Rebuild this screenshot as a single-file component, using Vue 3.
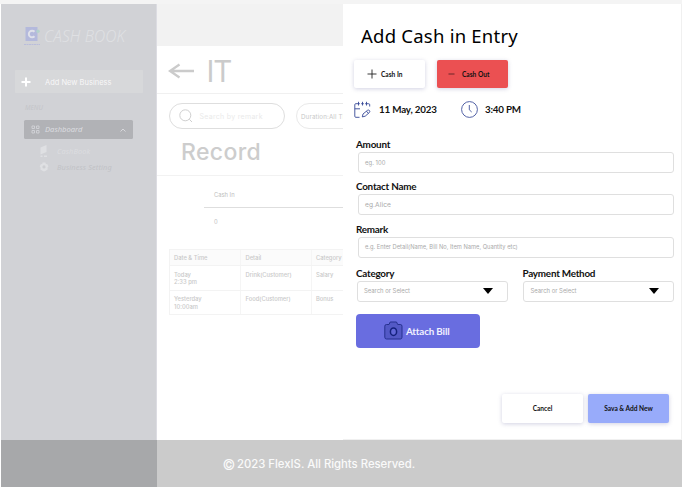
<script setup>
const rows = [
  ['Today\n2:33 pm', 'Drink(Customer)', 'Salary'],
  ['Yesterday\n10:00am', 'Food(Customer)', 'Bonus'],
]
const fields = [
  { label: 'Amount', hint: 'eg. 100', cls: 'amount' },
  { label: 'Contact Name', hint: 'eg.Alice', cls: 'contact' },
  { label: 'Remark', hint: 'e.g. Enter Detail(Name, Bill No, Item Name, Quantity etc)', cls: 'remark' },
]
const selects = ['Category', 'Payment Method']
</script>

<template>
  <div class="page">
    <div class="body">
      <aside class="sidebar">
        <div class="brand">
          <svg class="logo" width="18" height="20" viewBox="0 0 18 20">
            <rect x="1.500" y="1" width="12" height="14" fill="#b4b9dc" />
            <path d="M10.500 5.700A3.300 3.300 0 1 0 10.500 10.300" fill="none" stroke="#dfe1ea" stroke-width="2" />
            <circle cx="14" cy="5.200" r="1.700" fill="#b2d2cc" />
            <path d="M0 18.500H16" stroke="#b9bddb" stroke-width="1" stroke-dasharray="2 .5" />
          </svg>
          <span class="brand-name">CASH BOOK</span>
        </div>
        <div class="add-business">
          <svg width="10" height="10" viewBox="0 0 10 10"><path d="M5 .5V9.500M.5 5H9.500" stroke="#fff" stroke-width="2" /></svg>
          <span>Add New Business</span>
        </div>
        <div class="menu-title"><span>MENU</span></div>
        <div class="dashboard">
          <svg width="9" height="9" viewBox="0 0 9 9" fill="none" stroke="#d3d4d8" stroke-width=".9"><path d="M1 1h2.500v2.500H1zM5.500 1H8v2.500H5.500zM1 5.500h2.500V8H1zM5.500 5.500H8V8H5.500z" /></svg>
          <span>Dashboard</span>
          <svg class="chev" width="6" height="4" viewBox="0 0 6 4"><path d="M.5 3.500L3 1L5.500 3.500" fill="none" stroke="#dcdde0" stroke-width=".9" /></svg>
        </div>
        <div class="sub">
          <svg width="10" height="13" viewBox="0 0 10 13" fill="#dfe0e3"><path d="M1.500 2.500L7.500 0V7L1.500 9.500zM1.500 10.500h2v1.500h-2zM5 10.500h3v1.500H5z" /></svg>
          <span class="s1">CashBook</span>
        </div>
        <div class="sub">
          <svg width="10" height="10" viewBox="0 0 10 10"><path d="M3.600.6h2.800l.5 1.500 1.500.1 1 2.300-1 1.200.4 1.600-2 1.500L5 9.400 3.400 8.800l-2-1.400.3-1.700-1-1.200 1-2.300 1.500-.1z" fill="#dfe0e3" /><circle cx="5" cy="4.900" r="1.600" fill="#cdced2" /></svg>
          <span class="s2">Business Setting</span>
        </div>
      </aside>
      <main class="main">
        <div class="band"></div>
        <div class="heading">
          <svg width="27" height="16" viewBox="0 0 27 16"><path d="M26 8H2M11.500 1.500L2 8L11.500 14.500" fill="none" stroke="#cbcbcb" stroke-width="2.300" /></svg>
          <span>IT</span>
        </div>
        <div class="filters">
          <div class="search">
            <svg width="14" height="14" viewBox="0 0 14 14" fill="none" stroke="#cfcfcf"><circle cx="6.300" cy="6.300" r="5.500" /><path d="M10.300 10.300L13 13" /></svg>
            <span>Search by remark</span>
          </div>
          <div class="duration"><span>Duration:All Time</span></div>
        </div>
        <h2 class="record"><span>Record</span></h2>
        <div class="summary">
          <div class="sum-label">Cash In</div>
          <div class="sum-value">0</div>
        </div>
        <div class="table">
          <div class="row head"><div>Date &amp; Time</div><div>Detail</div><div>Category</div></div>
          <div v-for="r in rows" :key="r[1]" class="row"><div v-for="c in r" :key="c">{{ c }}</div></div>
        </div>
      </main>
    </div>
    <footer class="footer">
      <div class="footer-side"></div>
      <div class="footer-main"><span class="copy">©</span><span class="rights">2023 FlexIS. All Rights Reserved.</span></div>
    </footer>

    <section class="drawer">
      <h1><span>Add Cash in Entry</span></h1>
      <div class="types">
        <div class="btn cash-in">
          <svg width="10" height="10" viewBox="0 0 10 10"><path d="M5 .5V9.500M.5 5H9.500" stroke="#222" stroke-width=".9" /></svg>
          <span>Cash In</span>
        </div>
        <div class="btn cash-out">
          <svg width="7" height="4" viewBox="0 0 7 4"><path d="M.5 2H6.500" stroke="#5f2225" stroke-width=".9" /></svg>
          <span>Cash Out</span>
        </div>
      </div>
      <div class="when">
        <svg width="17" height="18" viewBox="0 0 17 18" fill="none" stroke="#354796" stroke-width=".9">
          <path d="M4.500.8V4.500M8.500.8V4.500M12.500.8V4.500M5.800 2.700H1.800Q.8 2.700.8 3.700V15.300Q.8 16.300 1.800 16.300H5.500M7.200 2.700h2.600M11.200 2.700H14.500Q15.700 2.700 15.700 3.700V5.500M.8 7.800H6" />
          <path d="M8.300 15.900L9 13L13.500 9.300Q14.700 8.700 15.500 9.600Q16.200 10.600 15.400 11.500L11.200 15.200zM12.500 10.200L14.300 12.300" />
        </svg>
        <span class="date">11 May, 2023</span>
        <svg width="17" height="17" viewBox="0 0 17 17" fill="none" stroke="#354796" stroke-width=".85"><circle cx="8.500" cy="8.500" r="7.900" /><path d="M8.300 4V8.800L10.700 11" /></svg>
        <span class="time">3:40 PM</span>
      </div>
      <div class="fields">
        <div v-for="f in fields" :key="f.label" class="field" :class="f.cls">
          <label><span>{{ f.label }}</span></label>
          <div class="input"><span>{{ f.hint }}</span></div>
        </div>
      </div>
      <div class="selects">
        <div v-for="(s, i) in selects" :key="s" class="field" :class="'sel' + i">
          <label><span>{{ s }}</span></label>
          <div class="input select">
            <span>Search or Select</span>
            <svg width="10" height="6" viewBox="0 0 10 6"><path d="M0 0H10L5 6z" fill="#000" /></svg>
          </div>
        </div>
      </div>
      <div class="attach">
        <svg width="19" height="19" viewBox="0 0 19 19" fill="#5359c6" stroke="#26318f" stroke-width="1">
          <path d="M2.500 3.500H5L6.200 1H12.500L13.700 3.500H16.300Q18 3.500 18 5.200V16.200Q18 18 16.300 18H2.500Q.8 18 .8 16.200V5.200Q.8 3.500 2.500 3.500z" />
          <ellipse cx="9.500" cy="10.700" rx="3.100" ry="3.800" fill="#6268d8" stroke="#15227c" stroke-width="1.500" />
        </svg>
        <span>Attach Bill</span>
      </div>
      <div class="actions">
        <div class="btn cancel"><span>Cancel</span></div>
        <div class="btn save"><span>Sava &amp; Add New</span></div>
      </div>
    </section>
  </div>
</template>

<style>
body { background: #fff; overflow: hidden; }
</style>

<style scoped>
* { box-sizing: border-box; }
span { white-space: nowrap; }
svg { display: block; flex: none; }
.page { position: relative; width: 682px; height: 487px; display: flex; flex-direction: column; padding-top: 4px; background: linear-gradient(#f4f4f4 4px, #fff 4px); font-family: Inter, sans-serif; }
.body { display: flex; height: 436px; }
.sidebar { width: 156px; margin-left: 1px; background: #d1d2d6; border-right: 1px solid #dcdce2; padding: 22px 0 0 14px; font-family: "Noto Sans", sans-serif; }
.brand { display: flex; height: 22px; padding-left: 9px; }
.brand-name { font-style: italic; font-size: 15.500px; line-height: 20px; color: #dfe0e3; margin-left: 2px; letter-spacing: .1px; font-weight: 300; }
.add-business { display: flex; align-items: center; width: 128px; height: 23px; margin-top: 22px; padding-left: 6px; background: #d7d8da; color: #f7f7f8; font: 7.5px/23px Inter, sans-serif; border-radius: 1px; }
.add-business span { margin-left: 14px; padding-top: 1px; }
.menu-title { height: 27px; padding: 9px 0 0 10px; font: italic 6.500px/12px "Noto Sans", sans-serif; color: #c4c5c9; }
.dashboard { display: flex; align-items: center; margin-left: 9px; width: 109px; height: 19px; padding: 0 7px; background: #b1b2b6; border-radius: 1.500px; color: #dcdde0; font-style: italic; font-size: 7.6px; }
.dashboard span { margin-left: 5px; margin-top: -1px; }
.chev { margin-left: auto; }
.sub { display: flex; align-items: center; height: 16px; margin-left: 24px; font-style: italic; font-size: 7.400px; }
.dashboard + .sub { margin-top: 4px; }
.sub span { margin-left: 8px; letter-spacing: .12px; }
.s1 { color: #dcdde0; }
.s2 { color: #c1c2c6; }
.main { flex: 1; overflow: hidden; color: #cbcbcb; }
.band { height: 42px; background: #f2f2f2; }
.heading { display: flex; align-items: center; height: 48px; border-bottom: 1px solid #f0f0f0; padding: 3px 0 0 11px; font-size: 29.500px; }
.heading span { margin-left: 11.500px; letter-spacing: -1.200px; }
.filters { display: flex; padding: 9px 0 0 12px; gap: 11px; font-size: 7px; }
.search, .duration { display: flex; align-items: center; height: 26px; border: 1px solid #dedede; border-radius: 13px; width: 116px; padding-left: 9px; }
.search span { margin-left: 6.500px; color: #eaeaea; letter-spacing: .3px; }
.duration { width: 80px; padding-left: 4px; border-color: #e9e9e9; color: #c8c8c8; font-size: 6.200px; letter-spacing: .15px; flex: none; }
.record { margin: 0; height: 47px; border-bottom: 1px solid #f2f2f2; padding: 8px 0 0 24px; font: 500 23px/30px Inter, sans-serif; letter-spacing: .35px; color: #cdcdcd; }
.summary { margin: 13px 0 0 47px; height: 59.500px; font-size: 5.8px; line-height: 12px; color: #bebebe; }
.sum-label { height: 19px; padding-left: 10px; border-bottom: 1px solid #dedede; }
.sum-value { padding: 7.500px 0 0 10px; }
.table { width: 214px; margin-left: 11.500px; border: 1px solid #f3f3f3; border-right: 0; font-weight: 500; font-size: 5.8px; line-height: 7.600px; color: #c9c9c9; }
.row { display: grid; grid-template-columns: 70.500px 70.500px 71px; height: 24.500px; border-bottom: 1px solid #f3f3f3; white-space: pre-line; }
.row:last-child { border-bottom: 0; height: 23px; }
.row div { padding: 4.500px 0 0 4.500px; }
.row div + div { border-left: 1px solid #f5f5f5; }
.head { height: 16.500px; background: #fbfbfb; }
.footer { display: flex; height: 47px; background: #cbcbcb; margin-left: 1px; }
.footer-side { width: 155.500px; background: #a7a8aa; }
.footer-main { display: flex; align-items: center; padding-left: 66px; color: #fafafa; font-weight: 500; padding-top: 1px; }
.copy { font-size: 14px; width: 14.500px; font-weight: 400; }
.rights { font-size: 11.300px; }
.drawer { position: absolute; left: 343px; top: 4px; width: 339px; height: 436px; background: #fff; border-right: 1px solid #f0f0f0; border-bottom: 1px solid #f0f0f0; font-family: Lato, sans-serif; color: #111; }
h1 { margin: 0; height: 56px; padding: 18px 0 0 18px; font: 400 18.500px/27px "Noto Sans", sans-serif; letter-spacing: .23px; color: #000; }
.types { display: flex; gap: 12px; padding-left: 11px; }
.btn { display: flex; align-items: center; width: 71px; height: 28px; border-radius: 2px; font-weight: 700; font-size: 6.600px; box-shadow: 0 1px 4px rgba(90, 90, 150, .28); background: #fff; }
.cash-in { padding-left: 13px; }
.cash-in span { margin-left: 4px; }
.cash-out { background: #eb5052; padding-left: 11px; }
.cash-out span { margin-left: 7px; }
.when { display: flex; align-items: center; height: 18px; margin-top: 12.500px; padding-left: 11px; font-weight: 700; font-size: 9.800px; }
.date { width: 82px; margin: -2px 0 0 8px; letter-spacing: -.18px; }
.time { margin: -2px 0 0 7px; letter-spacing: -.2px; }
.fields { padding-top: 16.500px; }
.field label { display: block; height: 17px; padding-left: 13px; font-weight: 700; font-size: 9.900px; letter-spacing: -.24px; line-height: 19px; }
.fields .field { height: 42.400px; }
.input { display: flex; align-items: center; height: 21px; border: 1px solid #dfdfdf; border-radius: 3px; padding-left: 6.500px; font: 5.900px/12px Inter, sans-serif; color: #a9a9a9; }
.fields .input { margin-left: 14.500px; width: 316px; }
.amount .input { letter-spacing: .05px; }
.contact .input { font-size: 6.600px; letter-spacing: .1px; }
.remark .input { font-size: 5.750px; }
.selects { display: grid; grid-template-columns: 166.500px 167px; padding-top: 1.800px; }
.selects .input { margin-left: 13.500px; width: 151px; padding-right: 14px; justify-content: space-between; letter-spacing: 0; }
.attach { display: flex; align-items: center; width: 124px; height: 34px; margin: 12px 0 0 12.500px; padding-left: 28px; border-radius: 4px; background: #696de0; color: #f1f1ff; font-weight: 700; font-size: 9.800px; letter-spacing: -.15px; }
.attach span { margin-left: 3.500px; }
.actions { display: flex; gap: 5px; margin: 46px 0 0 159px; }
.actions .btn { width: 81px; height: 29px; justify-content: center; }
.actions .save { background: #98abfa; }
</style>
